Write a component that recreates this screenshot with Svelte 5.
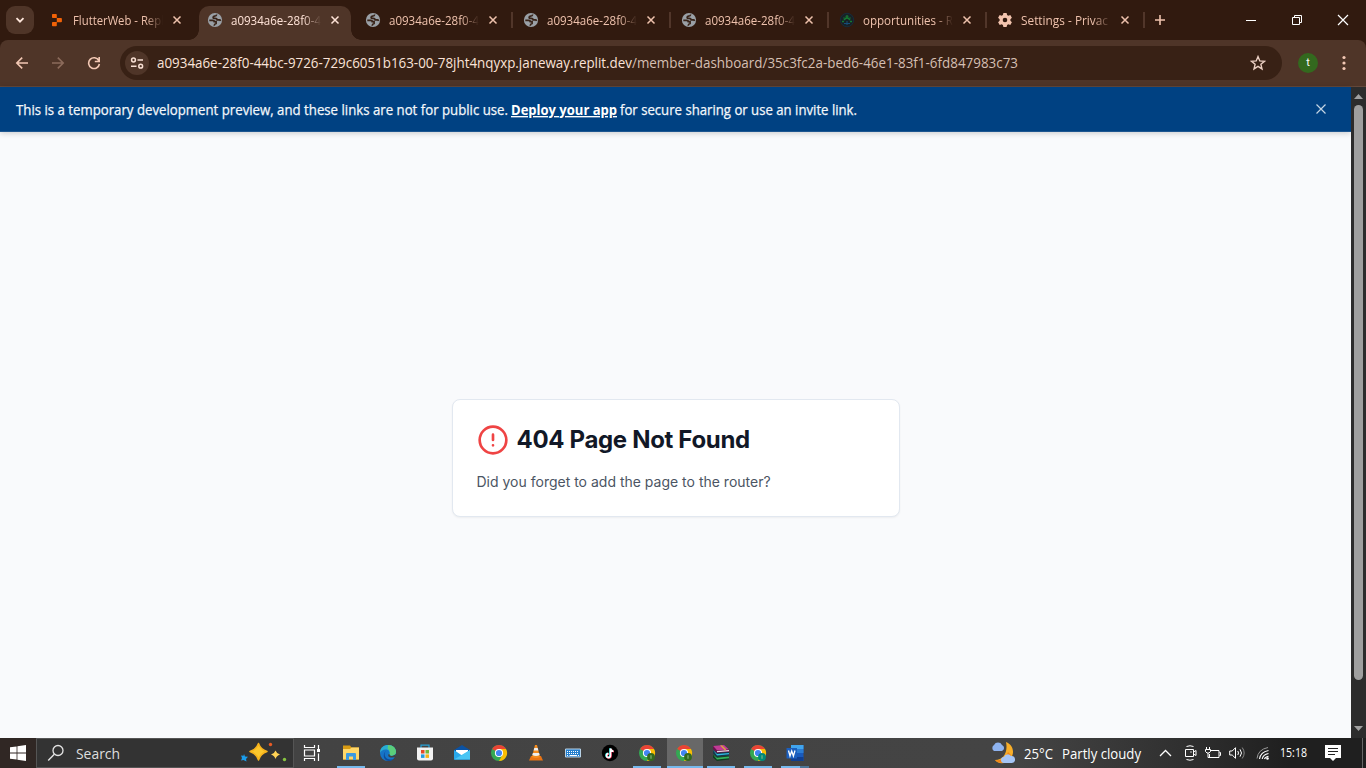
<script>
  const tabs = [
    { icon: 'replit', title: 'FlutterWeb - Repl', w: 91 },
    { icon: 'globe', title: 'a0934a6e-28f0-4', w: 90, active: true },
    { icon: 'globe', title: 'a0934a6e-28f0-4', w: 90 },
    { icon: 'globe', title: 'a0934a6e-28f0-4', w: 90, sep: true },
    { icon: 'globe', title: 'a0934a6e-28f0-4', w: 90, sep: true },
    { icon: 'team', title: 'opportunities - R', w: 90, sep: true },
    { icon: 'gear', title: 'Settings - Privac', w: 87, sep: true }
  ];
  const apps = [
    { icon: 'taskview' },
    { icon: 'explorer', open: true },
    { icon: 'edge' },
    { icon: 'store' },
    { icon: 'mail' },
    { icon: 'chrome' },
    { icon: 'vlc' },
    { icon: 'keyboard' },
    { icon: 'tiktok' },
    { icon: 'chrome', badge: '#33691e', open: true },
    { icon: 'chrome', badge: '#33691e', open: true, current: true },
    { icon: 'winrar', open: true },
    { icon: 'chrome', badge: '#00897b', open: true },
    { icon: 'word', open: true, stacked: true }
  ];
</script>

{#snippet label(text, w, size, h, base)}
  <svg class="label" width={w} height={h}><text x="0" y={base} font-size={size} textLength={w} lengthAdjust="spacingAndGlyphs">{text}</text></svg>
{/snippet}

{#snippet favicon(name)}
  <svg class="favicon" width="16" height="16" viewBox="0 0 16 16">
    {#if name === 'replit'}
      <path fill="#f26207" d="M3 2.800Q3 2 3.800 2H7q.8 0 .8.800V6H3.800Q3 6 3 5.200zM7.800 6H12q.9 0 .9.800v2.600q0 .8-.9.8H7.800zM3 10.900q0-.8.8-.8h4v3.300q0 .8-.8.8H3.800q-.8 0-.8-.8z" />
    {:else if name === 'globe'}
      <circle cx="8" cy="8" r="7.100" fill="#9aa0a6" />
      <path d="M2.300 8.300H5.500q1.800 0 1.800 1.400h1.800v1.800q-1.800.3-1.900 2.200" fill="none" stroke="#382318" stroke-width="1.700" />
      <path d="M9.700 2.500q-.2 1.600-2.200 1.700-1.400.2-1.400 1.200t1.600 1q2.300-.2 2.500 1.500h2.200q.8 0 1.300 1" fill="none" stroke="#382318" stroke-width="1.700" />
    {:else if name === 'team'}
      <circle cx="8" cy="8" r="6.700" fill="#182126" stroke="#172c3b" />
      <circle cx="8" cy="4.500" r="1.500" fill="#176b30" /><path d="M5 8q3-4 6 0" stroke="#157a31" stroke-width="1.300" fill="none" /><path d="M3 9.500h2M11 9.500h2M4.500 6h1M10.500 6h1" stroke="#157a31" stroke-width="1.400" /><path d="M8 9v4M5 11.500h6" stroke="#164e79" />
    {:else}
      <path fill="#f3c4ae" fill-rule="evenodd" d="M6.400 1h3.200l.5 2 1.200.7 2-.6 1.600 2.700-1.500 1.500v1.400l1.500 1.500-1.600 2.700-2-.6-1.200.7-.5 2H6.400l-.5-2-1.200-.7-2 .6-1.600-2.700 1.500-1.500V7.300L1.100 5.800l1.600-2.700 2 .6L5.900 3zM8 5.700a2.300 2.300 0 1 0 0 4.600 2.300 2.300 0 0 0 0-4.600z" />
    {/if}
  </svg>
{/snippet}

{#snippet appIcon(a)}
  <svg width="18" height="18" viewBox="0 0 18 18">
    {#if a.icon === 'taskview'}
      <path d="M1.500 1v2.500h10V1M1.500 17v-2.500h10V17M1.500 6h10v6h-10zM15.500 1v4M15.500 9.500V17" fill="none" stroke="#fff" stroke-width="1.200" /><path d="M14 5h3v3h-3z" fill="#fff" />
    {:else if a.icon === 'explorer'}
      <path d="M1 1.500h7l1.500 2H17v12H1z" fill="#d99b13" /><path d="M1 5h7l1.500-1.500H17V15.500H1z" fill="#ffd768" /><path d="M4 16V10q0-1 1-1h8q1 0 1 1v6h-3v-3.500H7V16z" fill="#3b9ae1" />
    {:else if a.icon === 'edge'}
      <circle cx="9" cy="9" r="8" fill="#1674c7" /><path d="M1 9C1 3.500 5 1 9 1c5 0 8 3.300 8 6.800 0 2.700-2 4-4.300 4-1.800 0-2.700-.8-2-1.700C11.300 8 9.700 5.600 6.800 5.600 3.500 5.600 1.500 7.500 1 9z" fill="#28acd2" /><path d="M9 1c5 0 8 3.300 8 6.800 0 2.700-2 4-4.300 4-1.800 0-2.700-.8-2-1.700.6-2.500-.3-4-2-5z" fill="#5bce7a" /><path d="M7.200 7c-2 1.500-2.200 4.500-.2 6.700 2 2 5.500 2.500 8.500.2A8 8 0 0 1 9 17c-5-1-5.500-8-1.800-10z" fill="#0d4b9b" /><path d="M10.700 10c-.7 1 .2 1.900 2 1.900 1.700 0 3.100-.6 3.900-1.800l.4 3-4 .5c-3 0-5-2-3-3.600z" fill="#424242" />
    {:else if a.icon === 'store'}
      <path d="M5 4.500V1.200h8v3.300" fill="none" stroke="#26a2d8" stroke-width="1.200" /><path d="M1 3.500h16v11q0 2-2 2H3q-2 0-2-2z" fill="#f2f2f2" /><path d="M5 6h3.500v3.500H5z" fill="#e64a26" /><path d="M9.500 6H13v3.500H9.500z" fill="#73b83b" /><path d="M5 10.400h3.500v3.500H5z" fill="#249be0" /><path d="M9.500 10.400H13v3.500H9.500z" fill="#f7b318" />
    {:else if a.icon === 'mail'}
      <path d="M1 6l8-5 8 5v9.500H1z" fill="#0b52a3" /><path d="M3 6h12v5H3z" fill="#fff" /><path d="M1 6l8 5.500L17 6v9.500H1z" fill="#29a8ea" /><path d="M1 15.500l16-9.500v9.500z" fill="#48c5f4" />
    {:else if a.icon === 'chrome'}
      <circle cx="9" cy="9" r="8" fill="#34a853" /><path d="M9 9 2.100 5A8 8 0 0 1 16 5H9z" fill="#ea4335" /><path d="M9 5h7a8 8 0 0 1-7 12l3.500-6z" fill="#fbbc04" /><circle cx="9" cy="9" r="4.100" fill="#fff" /><circle cx="9" cy="9" r="3.100" fill="#4285f4" />
      {#if a.badge}<circle cx="13" cy="13" r="3.900" fill={a.badge} /><path d="M12.500 11.200h1v3.600h-1z" fill="#93bf85" />{/if}
    {:else if a.icon === 'vlc'}
      <path d="M4 12h10l2 4.500H2z" fill="#ea7414" /><path d="M8 1h2l3 12q-4 2-8 0z" fill="#f58c1e" /><path d="M7.300 4h3.400l.7 2.500H6.600zM5.900 9h6.200l.6 2q-3.700 1.800-7.400 0z" fill="#eee" />
    {:else if a.icon === 'keyboard'}
      <path d="M1.500 5h15v8h-15z" fill="#247fce" stroke="#b8d2e6" /><path d="M3 7.500h12M3 9.500h12" stroke="#fff" stroke-width="1" stroke-dasharray="1 1" /><path d="M3 11.500h1M5.500 11.500H13M14 11.500h1" stroke="#fff" />
    {:else if a.icon === 'tiktok'}
      <circle cx="9" cy="9" r="8.200" fill="#000" /><g fill="none" stroke-width="1.600"><path d="M9 4.300v7a2 2 0 1 1-2-2M9 4.500q.7 2.300 3 2.500" stroke="#25f4ee" /><path d="M10 5v7a2 2 0 1 1-2-2M10 5q.8 2.500 3 2.700" stroke="#fe2c55" /><path d="M9.500 4.600v7a2 2 0 1 1-2-2M9.500 4.600q.7 2.300 3 2.600" stroke="#fff" /></g>
    {:else if a.icon === 'winrar'}
      <path d="M1 2l11-1 5 4.500L5 6.500z" fill="#c23a96" /><path d="M1 2l4 4.500 12-1V8L5 9 1 5z" fill="#6f0e51" /><path d="M5 7l12-1v1.200L5 8.200z" fill="#e5d8e0" /><path d="M1 6l4 3 12-1v3.500L5 13 1 9.500z" fill="#153849" /><path d="M1 6l4 4 12-1v1.300L5 11.500z" fill="#31b9e2" /><path d="M1 10.500L5 13l12-1.200v3.700L5 17l-4-3.500z" fill="#103d20" /><path d="M1 10.500l4 3.300 12-1.200v1.600L5 15.500z" fill="#34b35a" /><path d="M10 1.300l4 4v1l-1 .3-5-5z" fill="#d6a341" />
    {:else}
      <path d="M5 1h12.500v16H5z" fill="#185abd" /><path d="M5 1h12.500v4H5z" fill="#41a5ee" /><path d="M5 5h12.500v4H5z" fill="#2b7cd3" /><path d="M5 13h12.500v4H5z" fill="#103f91" /><path d="M.5 4h10.500v10.500H.5z" fill="#1b5fbe" /><path d="M2.500 6.500l1.500 5.500 1.700-5 1.700 5 1.600-5.500" fill="none" stroke="#fff" stroke-width="1.300" />
    {/if}
  </svg>
{/snippet}

<div class="screen">
  <header class="strip">
    <button class="search-tabs" aria-label="Search tabs"><svg width="12" height="12"><path d="M2.500 4.200 6 7.700l3.500-3.500" fill="none" stroke="#ffe7dc" stroke-width="1.800" /></svg></button>
    <div class="tabs">
      {#each tabs as t}
        <div class="tab" class:active={t.active} class:sep={t.sep}>
          {@render favicon(t.icon)}
          <div class="title">{@render label(t.title, t.w, 11.7, 18, 13.5)}</div>
          <svg class="close" width="10" height="10"><path d="M1.500 1.500l7 7M8.500 1.500l-7 7" fill="none" stroke="currentColor" stroke-width="1.500" /></svg>
        </div>
      {/each}
      <svg class="plus" width="12" height="12"><path d="M1 6h10M6 1v10" stroke="#efc2ad" stroke-width="1.600" /></svg>
    </div>
    <div class="controls">
      <svg width="10" height="10"><path d="M0 5.500h10" stroke="#fff" /></svg>
      <svg width="12" height="12"><path d="M1.500 3.500h7v7h-7zM3.500 3.500v-2h7v7h-2" fill="none" stroke="#fff" /></svg>
      <svg width="12" height="12"><path d="M1 1l10 10M11 1L1 11" stroke="#fff" stroke-width="1.200" /></svg>
    </div>
  </header>

  <div class="toolbar-wrap">
    <div class="toolbar">
      <svg class="nav" width="14" height="14"><path d="M13 7H2M7.200 1.600L1.800 7l5.400 5.400" fill="none" stroke="#f3c8b4" stroke-width="1.600" /></svg>
      <svg class="nav" width="14" height="14"><path d="M1 7h11M6.800 1.600L12.200 7l-5.400 5.400" fill="none" stroke="#8c6b5b" stroke-width="1.600" /></svg>
      <svg class="nav" width="14" height="14"><path d="M11.800 4.500A5.400 5.400 0 1 0 12.400 8M12.200 1v4.500H7.800" fill="none" stroke="#f3c8b4" stroke-width="1.600" /></svg>
      <div class="omnibox">
        <span class="site"><svg width="14" height="14"><g fill="none" stroke="#f8dfd3" stroke-width="1.500"><circle cx="3.500" cy="4" r="1.900" /><path d="M7.500 4H13M1 10.200h5.500" /><circle cx="10.700" cy="10.200" r="1.900" /></g></svg></span>
        <span class="host">{@render label('a0934a6e-28f0-44bc-9726-729c6051b163-00-78jht4nqyxp.janeway.replit.dev', 475, 13.8, 20, 15)}</span><span class="path">{@render label('/member-dashboard/35c3fc2a-bed6-46e1-83f1-6fd847983c73', 386, 13.8, 20, 15)}</span>
        <svg class="star" width="16" height="16"><path d="M8 1.600l1.800 4.300 4.700.4-3.600 3 1.100 4.600-4-2.500-4 2.500 1.100-4.600-3.600-3 4.700-.4z" fill="none" stroke="#ecd0c3" stroke-width="1.400" /></svg>
      </div>
      <span class="avatar">t</span>
      <svg class="dots" width="4" height="16" fill="#f3c8b4"><circle cx="2" cy="2.500" r="1.600" /><circle cx="2" cy="8" r="1.600" /><circle cx="2" cy="13.500" r="1.600" /></svg>
    </div>
  </div>

  <div class="viewport">
    <main>
      <div class="banner">
        <span class="medium">{@render label('This is a temporary development preview, and these links are not for public use.', 492, 13.8, 20, 15)}</span>
        <a href="#deploy">{@render label('Deploy your app', 106, 13.6, 20, 15)}</a>
        <span class="medium">{@render label('for secure sharing or use an invite link.', 237, 13.8, 20, 15)}</span>
        <svg class="dismiss" width="12" height="12"><path d="M1.500 1.500l9 9M10.500 1.500l-9 9" stroke="#c3d4e4" stroke-width="1.200" /></svg>
      </div>
      <div class="content">
        <section class="card">
          <div class="heading">
            <svg width="32" height="32" viewBox="0 0 24 24" fill="none" stroke="#ef4444" stroke-width="2" stroke-linecap="round"><circle cx="12" cy="12" r="10" /><path d="M12 8v4M12 16h.01" /></svg>
            <h1>404 Page Not Found</h1>
          </div>
          <p>Did you forget to add the page to the router?</p>
        </section>
      </div>
    </main>
    <div class="scrollbar">
      <svg width="9" height="5"><path d="M0 5L4.500 0 9 5z" fill="#a0a0a0" /></svg>
      <div class="thumb"></div>
      <svg width="9" height="5"><path d="M0 0h9L4.500 5z" fill="#a0a0a0" /></svg>
    </div>
  </div>

  <footer>
    <div class="start"><svg width="16" height="16"><path d="M0 2.300l6.600-.9v6.100H0zM7.400 1.300L16 .1v7.400H7.400zM0 8.400h6.600v6.200L0 13.700zM7.400 8.400H16v7.500l-8.600-1.200z" fill="#fff" /></svg></div>
    <div class="search">
      <svg width="18" height="18"><circle cx="11" cy="6.500" r="5" fill="none" stroke="#e4e4e4" stroke-width="1.300" /><path d="M7.300 10.200L1.200 16.500" stroke="#e4e4e4" stroke-width="1.400" /></svg>
      <span>{@render label('Search', 44, 14.8, 20, 16)}</span>
      <svg class="sparkle" width="48" height="22"><path d="M18.500 1.500Q20.500 7.500 27 9.500q-6.500 2-8.500 8.500-2-6.500-8.500-8.500 6.500-2 8.500-8z" fill="#fcc72c" stroke="#f6b21c" stroke-width="1.500" stroke-linejoin="round" /><path d="M35.500 8.500q1 3 4.500 4-3.500 1-4.500 4.500-1-3.500-4.500-4.500 3.500-1 4.500-4z" fill="#ffd255" /><path d="M4 12l1 2.500 3 .3-2 2.200.5 2.500-3-1.500-2.500.5 1-2.500-1-2.500 2.500.2z" fill="#1a9dec" /><circle cx="30.500" cy="2.500" r="1.700" fill="#e95b25" /><circle cx="44.500" cy="17.500" r="1.700" fill="#87c440" /></svg>
    </div>
    <nav>
      {#each apps as a}
        <div class="app" class:open={a.open} class:current={a.current} class:stacked={a.stacked}>{@render appIcon(a)}</div>
      {/each}
    </nav>
    <div class="tray">
      <svg width="25" height="24"><path d="M16 1c7 3 9 10 5 16-4 6-12 7-16 2 9 0 13-8 11-18z" fill="#f8ae28" /><path d="M21 14c-3 8-11 10-16 5 7 1 11-2 13-8z" fill="#ee8319" /><path d="M4 10a3.500 3.500 0 0 1 0-6 4.500 4.500 0 0 1 8 0 3.200 3.200 0 0 1 0 6z" fill="#8eb3f0" /><path d="M14 22a3 3 0 0 1 0-6 4 4 0 0 1 7-1 3.500 3.500 0 0 1 1 7z" fill="#a6c5f6" /></svg>
      <span class="temp">{@render label('25°C', 29, 14.3, 20, 15.5)}</span>
      <span class="cond">{@render label('Partly cloudy', 79, 14.3, 20, 15.5)}</span>
      <svg class="caret" width="13" height="8"><path d="M1 7l5.500-5.500L12 7" fill="none" stroke="#fff" stroke-width="1.300" /></svg>
      <svg class="meet" width="13" height="16"><path d="M2.500 1.500q3.500-1.500 7 0M2.500 14.500q3.500 1.500 7 0M1.500 4.500h8v7h-8zM9.500 7L12 5.500v5L9.500 9" fill="none" stroke="#fff" /><circle cx="7" cy="7" r=".7" fill="#fff" /></svg>
      <svg class="battery" width="17" height="14"><path d="M6 4.500h8v7H4.500V8M14.500 6.500h1v3h-1M1.500 1v2.500M4.500 1v2.500M.5 3.500h5v2L4 7H2L.5 5.500zM3 7v4.500h2" fill="none" stroke="#fff" /></svg>
      <svg class="sound" width="17" height="14"><path d="M.7 5h2.500L6.500 1.700v10.600L3.200 9H.7zM8.800 5q1.400 2 0 4M11 3.300q3 3.700 0 7.400" fill="none" stroke="#fff" /><path d="M13.200 1.500q4 5.500 0 11" fill="none" stroke="#888" /></svg>
      <svg class="wifi" width="14" height="14"><g fill="none"><path d="M1 12.500Q2 3.500 12 1.500" stroke="#999" /><path d="M3.500 13Q4.500 6 12.500 4.500M6.200 13Q7 8.500 12.500 7.500M8.500 13Q9 11 12.500 10.300" stroke="#fff" stroke-width="1.100" /></g><circle cx="11.500" cy="12.500" r="1.300" fill="#fff" /></svg>
      <span class="time">{@render label('15:18', 27, 12, 18, 13)}</span>
      <svg class="note" width="16" height="17"><path d="M0 0h16v13h-5L8 16l-3-3H0z" fill="#fff" /><path d="M3 3.500h10M3 6.500h10M3 9.500h7" stroke="#222" /></svg>
      <i class="edge"></i>
    </div>
  </footer>
</div>

<style>
  :global(body) { margin: 0; overflow: hidden; }
  .screen { width: 1366px; height: 768px; display: flex; flex-direction: column; font-family: "Open Sans", "Noto Sans", sans-serif; }
  svg { display: block; flex: none; }
  .label { fill: currentColor; overflow: visible; }
  .strip { height: 40px; background: #311a0f; display: flex; }
  .search-tabs { width: 28px; height: 28px; margin: 6px 7px 0 6px; padding: 0; border: 0; border-radius: 9px; background: #4f3528; display: grid; place-items: center; flex: none; }
  .tabs { display: flex; padding-top: 6px; }
  .tab { width: 158px; height: 34px; box-sizing: border-box; padding: 0 0 6px 8px; display: flex; align-items: center; color: #efc2ad; position: relative; }
  .tab .title { width: 90px; flex: none; margin-left: 8px; -webkit-mask-image: linear-gradient(90deg, #000 72px, transparent 90px); mask-image: linear-gradient(90deg, #000 72px, transparent 90px); }
  .close { margin-left: 9px; }
  .tab.active { color: #ffe3d7; }
  .tab.active::before { content: ""; position: absolute; z-index: 0; left: 0; right: 6px; top: 0; bottom: 0; background: #4f3528; border-radius: 10px 10px 0 0; }
  .tab.active::after { content: ""; position: absolute; left: -10px; right: -4px; bottom: 0; height: 10px; background: radial-gradient(circle at 0 0, transparent 9.500px, #4f3528 10px) left / 10px 10px no-repeat, radial-gradient(circle at 100% 0, transparent 9.500px, #4f3528 10px) right / 10px 10px no-repeat; }
  .tab > :global(*) { z-index: 1; }
  .tab.sep::before { content: ""; position: absolute; left: -4px; top: 6px; width: 2px; height: 16px; background: #51362a; }
  .plus { order: 2; margin: 8px 0 0 9px; }
  .tabs::after { content: ""; order: 1; width: 2px; height: 16px; margin: 6px 0 0 -4px; background: #51362a; }
  .controls { margin-left: auto; padding: 0 17px 0 0; display: flex; align-items: center; gap: 34px; }
  .controls svg:first-child { margin-right: 1px; }
  .toolbar-wrap { background: #311a0f; height: 47px; flex: none; }
  .toolbar { height: 47px; box-sizing: border-box; background: #4f3528; border-bottom: 1px solid #64483a; border-radius: 8px 8px 0 0; display: flex; align-items: center; padding: 0 20px 0 15px; }
  .nav { margin-right: 22px; }
  .omnibox { width: 1162px; height: 34px; margin-left: -3px; box-sizing: border-box; background: #382115; border-radius: 17px; display: flex; align-items: center; padding: 0 16px 0 5px; flex: none; }
  .site { width: 24px; height: 24px; border-radius: 12px; background: #4f3528; display: grid; place-items: center; margin-right: 8px; }
  .host { color: #fbe3d8; }
  .path { color: #d5bfb2; }
  .star { margin-left: auto; }
  .avatar { width: 20px; height: 20px; margin-left: 16px; border-radius: 50%; background: #33691e; color: #fff; font: 11px/20px Roboto, sans-serif; text-align: center; }
  .dots { margin-left: auto; }
  .viewport { height: 651px; display: flex; }
  main { flex: 1; background: #f9fafc; display: flex; flex-direction: column; }
  .banner { height: 45px; box-sizing: border-box; background: #004182; border-bottom: 1px solid #1d5690; display: flex; align-items: center; padding: 2px 24px 0 16px; color: #f3f7fb; box-shadow: 0 1px 6px #0003; }
  .banner a { color: #fff; font-weight: 700; margin: 0 3px; text-decoration: none; }
  .banner a :global(text) { text-decoration: underline; }
  .medium :global(text) { stroke: currentColor; stroke-width: .25px; }
  .dismiss { margin: -2px 0 0 auto; }
  .content { flex: 1; display: flex; justify-content: center; align-items: flex-start; padding-top: 267px; }
  .card { width: 448px; height: 118px; box-sizing: border-box; border: 1px solid #e2e8f0; border-radius: 8px; background: #fff; padding: 24px; box-shadow: 0 1px 2px #0000000d; font-family: Inter, sans-serif; }
  .heading { display: flex; align-items: center; gap: 8px; }
  h1 { margin: 0; font-size: 24px; line-height: 32px; font-weight: 700; letter-spacing: -.33px; color: #111827; }
  p { margin: 16px 0 0; font-size: 14px; line-height: 20px; color: #4b5563; }
  .scrollbar { width: 15px; background: #2c2c2c; display: flex; flex-direction: column; align-items: center; padding: 7px 0; box-sizing: border-box; }
  .thumb { width: 9px; height: 575px; margin: 6px 0 auto; border-radius: 5px; background: #9f9f9f; }
  footer { height: 30px; display: flex; background: linear-gradient(90deg, #30272400 36px, #434343 294px, #444 1020px, #303030 1180px, #1f1f1f 1290px), #302724; }
  .start { width: 36px; display: grid; place-items: center; }
  .search { width: 258px; box-sizing: border-box; border: 1px solid #555; background: #333; display: flex; align-items: center; padding: 0 5px 0 10px; color: #dedede; }
  .search span { margin-left: 11px; }
  .sparkle { margin-left: auto; }
  nav { display: flex; }
  .app { width: 37px; height: 30px; display: grid; place-items: center; position: relative; }
  .app:first-child { margin-right: 2px; }
  .app svg { margin-right: 1px; }
  .app.current { background: linear-gradient(#686868, #686868) 1px 0 / 36px 100% no-repeat; }
  .app.open::after { content: ""; position: absolute; left: 4px; bottom: 0; width: 28px; height: 2px; background: #76b9ed; }
  .app.current::after { left: 1px; width: 36px; }
  .app.stacked::after { background: linear-gradient(90deg, #76b9ed 19px, #4d7698 19px); }
  .tray { margin-left: auto; display: flex; align-items: center; color: #fff; height: 30px; }
  .temp { margin-left: 9px; }
  .cond { margin-left: 9px; }
  .caret { margin-left: 18px; }
  .meet { margin-left: 12px; }
  .battery { margin-left: 8px; }
  .sound { margin-left: 7px; }
  .wifi { margin-left: 10px; }
  .time { margin-left: 10px; }
  .note { margin-left: 18px; }
  .edge { width: 1px; height: 30px; margin: 0 3px 0 21px; background: #666; }
</style>
